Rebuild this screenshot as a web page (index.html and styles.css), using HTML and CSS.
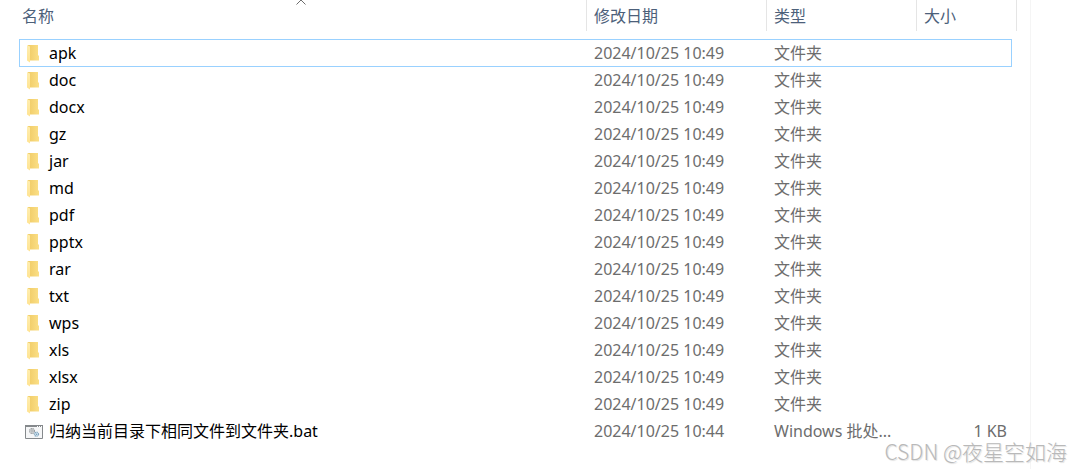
FILE: index.html
```
<!DOCTYPE html>
<html lang="zh-CN">
<head>
<meta charset="utf-8">
<title>文件列表</title>
<link rel="stylesheet" href="styles.css">
</head>
<body>
<svg class="defs" aria-hidden="true">
  <defs>
    <linearGradient id="back" x1="0" x2="1" y1="0" y2="0">
      <stop offset="0" stop-color="#f0cb66"/>
      <stop offset="1" stop-color="#fbdf86"/>
    </linearGradient>
    <linearGradient id="front" x1="0" x2="0" y1="0" y2="1">
      <stop offset="0" stop-color="#ffeeb0"/>
      <stop offset="1" stop-color="#ffe391"/>
    </linearGradient>
    <symbol id="folder" viewBox="0 0 12 18">
      <path fill="url(#back)" d="M1 0H11V10.500H12V15.500H1Z"/>
      <path fill="url(#front)" d="M0 0 3 1.500V17.500L0 15.500Z"/>
    </symbol>
    <symbol id="batch" viewBox="0 0 18 14">
      <path fill="#f5f6f7" stroke="#85898c" d="M.5.5H17.500V13.500H.5Z"/>
      <path fill="#85898c" d="M0 0H18V2H0Z"/>
      <path fill="#fff" d="M12 1H13V2H12ZM14 1H15V2H14ZM16 1H17V2H16Z"/>
      <circle cx="7" cy="6" r="2.300" fill="#e9ebec" stroke="#8b9094" stroke-width="1.300" stroke-dasharray="1.2 .5"/>
      <circle cx="7" cy="6" r=".8" fill="#7d8286"/>
      <circle cx="11.500" cy="9.200" r="2" fill="#d9ebf7" stroke="#83a6bd" stroke-width="1.300" stroke-dasharray="1.2 .5"/>
      <circle cx="11.500" cy="9.200" r=".7" fill="#7198b3"/>
    </symbol>
  </defs>
</svg>
<main class="pane">
  <table class="files">
    <colgroup><col><col class="col-date"><col class="col-type"><col class="col-size"></colgroup>
    <thead>
      <tr>
        <th aria-sort="ascending"><button type="button">名称</button><svg class="sort" viewBox="0 0 10 5" aria-hidden="true"><path d="M.5 4.500 5 0 9.500 4.500"/></svg></th>
        <th><button type="button">修改日期</button></th>
        <th><button type="button">类型</button></th>
        <th><button type="button">大小</button></th>
      </tr>
    </thead>
    <tbody>
      <tr class="focused"><td><div class="name"><svg class="folder"><use href="#folder"/></svg>apk</div></td><td>2024/10/25 10:49</td><td>文件夹</td><td></td></tr>
      <tr><td><div class="name"><svg class="folder"><use href="#folder"/></svg>doc</div></td><td>2024/10/25 10:49</td><td>文件夹</td><td></td></tr>
      <tr><td><div class="name"><svg class="folder"><use href="#folder"/></svg>docx</div></td><td>2024/10/25 10:49</td><td>文件夹</td><td></td></tr>
      <tr><td><div class="name"><svg class="folder"><use href="#folder"/></svg>gz</div></td><td>2024/10/25 10:49</td><td>文件夹</td><td></td></tr>
      <tr><td><div class="name"><svg class="folder"><use href="#folder"/></svg>jar</div></td><td>2024/10/25 10:49</td><td>文件夹</td><td></td></tr>
      <tr><td><div class="name"><svg class="folder"><use href="#folder"/></svg>md</div></td><td>2024/10/25 10:49</td><td>文件夹</td><td></td></tr>
      <tr><td><div class="name"><svg class="folder"><use href="#folder"/></svg>pdf</div></td><td>2024/10/25 10:49</td><td>文件夹</td><td></td></tr>
      <tr><td><div class="name"><svg class="folder"><use href="#folder"/></svg>pptx</div></td><td>2024/10/25 10:49</td><td>文件夹</td><td></td></tr>
      <tr><td><div class="name"><svg class="folder"><use href="#folder"/></svg>rar</div></td><td>2024/10/25 10:49</td><td>文件夹</td><td></td></tr>
      <tr><td><div class="name"><svg class="folder"><use href="#folder"/></svg>txt</div></td><td>2024/10/25 10:49</td><td>文件夹</td><td></td></tr>
      <tr><td><div class="name"><svg class="folder"><use href="#folder"/></svg>wps</div></td><td>2024/10/25 10:49</td><td>文件夹</td><td></td></tr>
      <tr><td><div class="name"><svg class="folder"><use href="#folder"/></svg>xls</div></td><td>2024/10/25 10:49</td><td>文件夹</td><td></td></tr>
      <tr><td><div class="name"><svg class="folder"><use href="#folder"/></svg>xlsx</div></td><td>2024/10/25 10:49</td><td>文件夹</td><td></td></tr>
      <tr><td><div class="name"><svg class="folder"><use href="#folder"/></svg>zip</div></td><td>2024/10/25 10:49</td><td>文件夹</td><td></td></tr>
      <tr><td><div class="name"><svg class="batch"><use href="#batch"/></svg>归纳当前目录下相同文件到文件夹.bat</div></td><td>2024/10/25 10:44</td><td>Windows 批处...</td><td class="size">1 KB</td></tr>
    </tbody>
  </table>
</main>
<div class="watermark">CSDN @夜星空如海</div>
</body>
</html>
```
FILE: styles.css
```
* {
  box-sizing: border-box;
}

body {
  margin: 0;
  position: relative;
  background: #fff;
  color: #6d6d6d;
  font: 16px/25px "Noto Sans", "Noto Sans CJK SC", sans-serif;
}

.defs {
  position: absolute;
  width: 0;
  height: 0;
}

.pane {
  min-height: 100vh;
  margin-right: 39px;
  padding: 0 13px 0 19px;
  border-right: 1px solid #f5f5f5;
}

.files {
  width: 100%;
  table-layout: fixed;
  border-collapse: separate;
  border-spacing: 0;
}

.col-date { width: 180px; }
.col-type { width: 150px; }
.col-size { width: 100px; }

th {
  position: relative;
  height: 31px;
  padding: 0;
  font-weight: 400;
  text-align: left;
  border-right: 1px solid #e5e5e5;
}

th button {
  display: block;
  width: 100%;
  height: 31px;
  padding: 2px 0 0 7px;
  border: 0;
  background: none;
  color: #4c607a;
  font: inherit;
  text-align: left;
}

th:first-child button {
  padding-left: 3px;
}

.sort {
  position: absolute;
  top: 0;
  left: 50%;
  width: 10px;
  height: 5px;
  margin-left: -7px;
  fill: none;
  stroke: #6d6d6d;
}

/* Space between the header and the first row */
tbody::before {
  content: "";
  display: table-row;
  height: 8px;
}

td {
  height: 27px;
  padding: 2px 0 0 7px;
  white-space: nowrap;
}

td:first-child {
  padding-left: 6px;
}

.name {
  display: flex;
  align-items: center;
  gap: 6px;
  color: #000;
}

.folder {
  width: 12px;
  height: 18px;
  margin: 0 4px 0 2px;
}

.batch {
  flex: none;
  width: 18px;
  height: 14px;
}

.size {
  padding-right: 10px;
  text-align: right;
}

.focused {
  position: relative;
}

.focused td:first-child::after {
  content: "";
  position: absolute;
  inset: 0 5px -1px 0;
  border: 1px solid #99d1ff;
}

.watermark {
  position: absolute;
  right: 3px;
  bottom: 4px;
  color: #b9b9b9;
  font: 300 21px/28px "Noto Sans CJK SC", sans-serif;
  text-shadow: 1px 1px 1px #e0e0e0;
}
```
